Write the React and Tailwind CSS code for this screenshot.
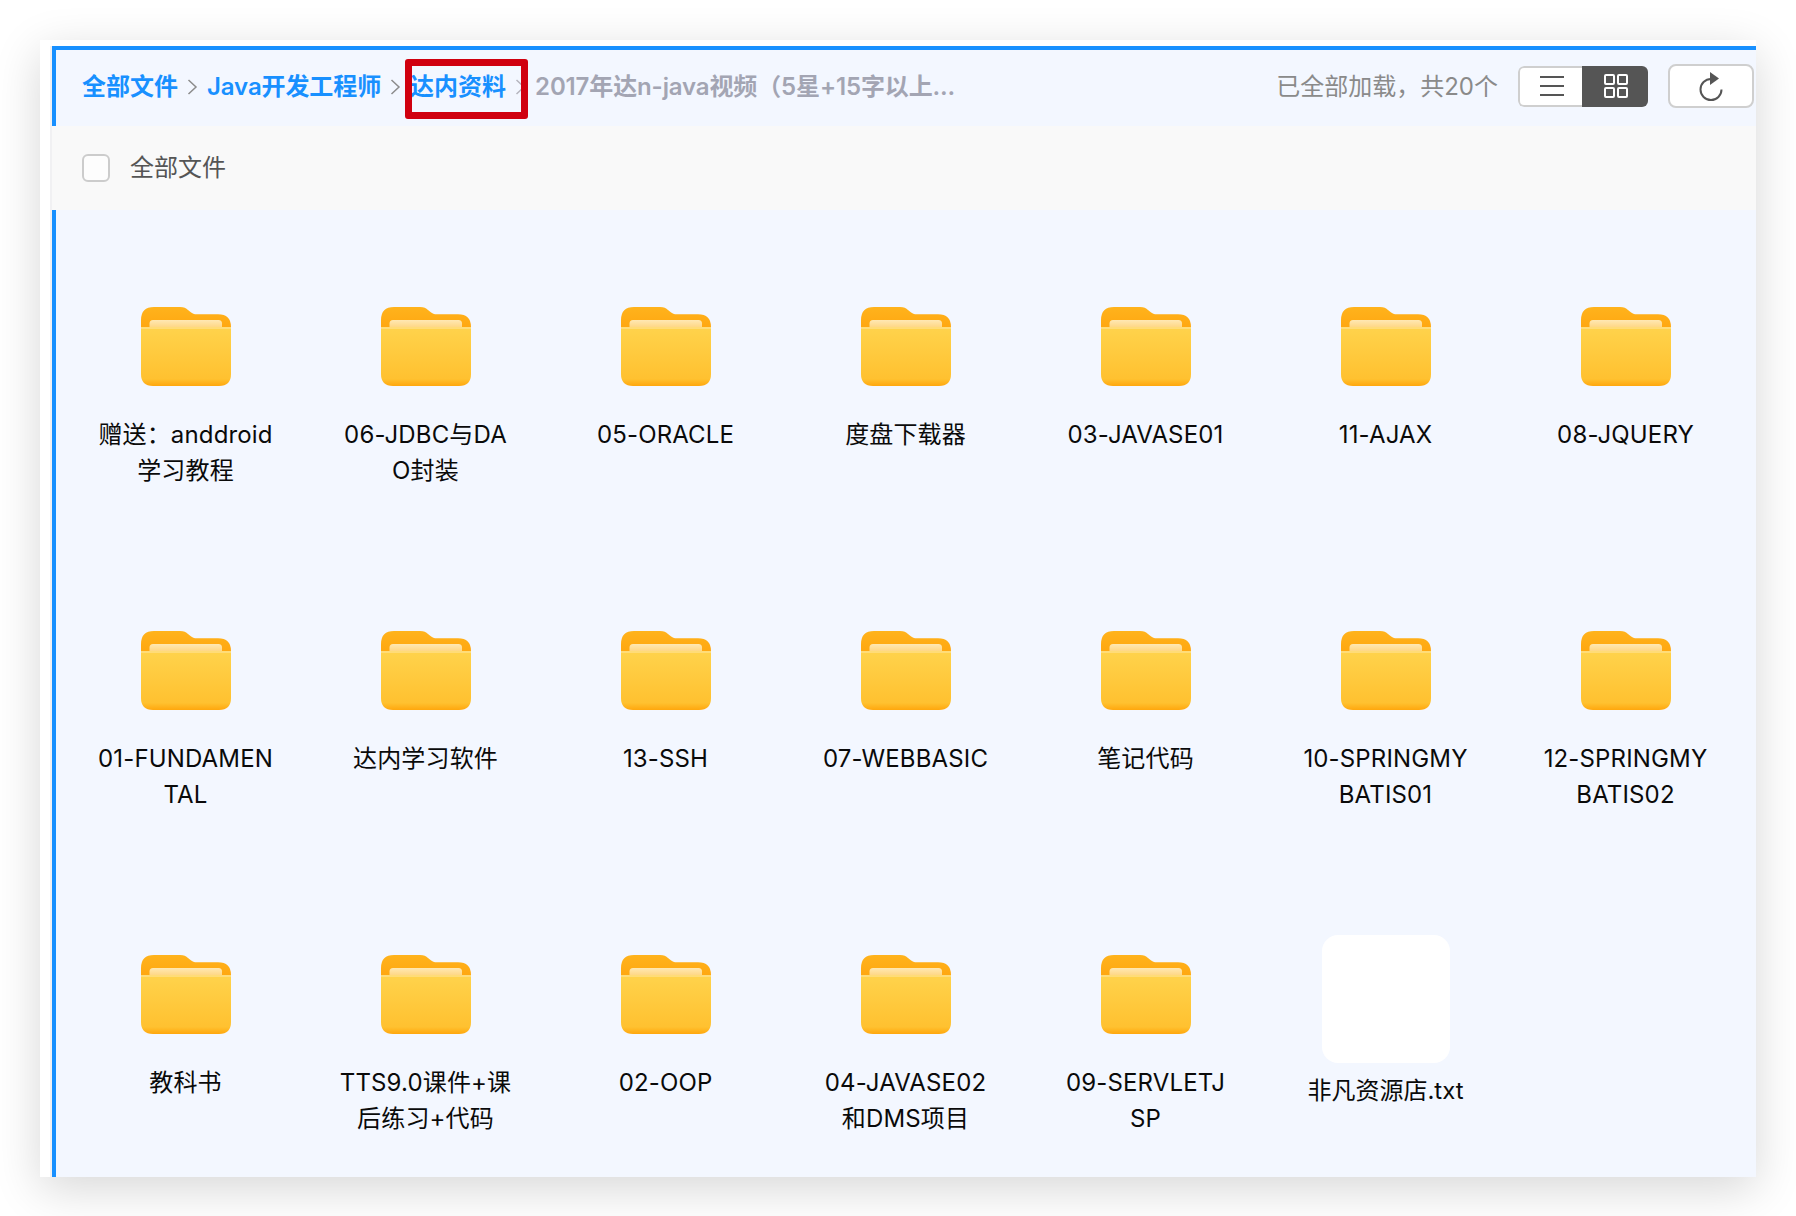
import React from "react";

const files = [
  ["赠送：anddroid", "学习教程"],
  ["06-JDBC与DA", "O封装"],
  ["05-ORACLE"],
  ["度盘下载器"],
  ["03-JAVASE01"],
  ["11-AJAX"],
  ["08-JQUERY"],
  ["01-FUNDAMEN", "TAL"],
  ["达内学习软件"],
  ["13-SSH"],
  ["07-WEBBASIC"],
  ["笔记代码"],
  ["10-SPRINGMY", "BATIS01"],
  ["12-SPRINGMY", "BATIS02"],
  ["教科书"],
  ["TTS9.0课件+课", "后练习+代码"],
  ["02-OOP"],
  ["04-JAVASE02", "和DMS项目"],
  ["09-SERVLETJ", "SP"],
];

const FolderIcon = () => (
  <svg width="90" height="79" viewBox="0 0 90 79" className="block">
    <defs>
      <linearGradient id="folderBack" x1="0" y1="0" x2="0" y2="1">
        <stop offset="0" stopColor="#ffb31c" />
        <stop offset="1" stopColor="#ff9f0a" />
      </linearGradient>
      <linearGradient id="folderPaper" x1="0" y1="0" x2="0" y2="1">
        <stop offset="0" stopColor="#ffe8b4" />
        <stop offset="1" stopColor="#ffc759" />
      </linearGradient>
      <linearGradient id="folderFront" x1="0" y1="0" x2="0" y2="1">
        <stop offset="0" stopColor="#ffd34c" />
        <stop offset="0.88" stopColor="#ffc130" />
        <stop offset="1" stopColor="#ffa70d" />
      </linearGradient>
    </defs>
    <path
      d="M0 13Q0 0 13 0H39C43 0 45 1 47 3L49.500 5C51.500 6.600 53 7.300 56 7.300H77Q90 7.300 90 20V34H0Z"
      fill="url(#folderBack)"
    />
    <rect x="8.500" y="13" width="72.500" height="14" rx="3.500" fill="url(#folderPaper)" />
    <path d="M0 20H90V67Q90 79 78 79H12Q0 79 0 67Z" fill="url(#folderFront)" />
    <rect x="0" y="20" width="90" height="2" fill="#ffdc78" />
  </svg>
);

const Chevron = ({ color = "#8c8c8c" }) => (
  <svg width="11" height="18" viewBox="0 0 11 18" fill="none" className="mx-[9px] shrink-0">
    <path d="M1.500 2L9 9L1.500 16" stroke={color} strokeWidth="1.500" />
  </svg>
);

const FileItem = ({ lines }) => (
  <div className="h-[324px] flex flex-col items-center">
    <div className="mt-[20px] mb-[31px]">
      <FolderIcon />
    </div>
    <div className="pr-[1px] text-center text-[24px] leading-[36px] tracking-[0.15px] text-[#0a0a0a] whitespace-nowrap">
      {lines.map((line) => (
        <div key={line}>{line}</div>
      ))}
    </div>
  </div>
);

export default function App() {
  return (
    <div
      className="h-[1216px] overflow-hidden bg-white pt-10 pl-10 pr-10"
      style={{ fontFamily: '"Inter", "Noto Sans CJK SC", sans-serif' }}
    >
      <div className="h-[1137px] bg-white pt-[6px] pl-[10px] shadow-[0_12px_44px_rgba(0,0,0,0.16)]">
        <div className="h-full border-l-2 border-[#f1f1f3] flex flex-col">
          {/* Header */}
          <div className="relative h-[80px] shrink-0 bg-[#f3f7ff] border-t-4 border-l-4 border-[#1890ff] flex items-center pl-[26px] pr-[2px] pb-[3px]">
            <span className="text-[24px] font-semibold text-[#1890ff]">全部文件</span>
            <Chevron />
            <span className="text-[24px] font-semibold tracking-[-0.1px] text-[#1890ff]">Java开发工程师</span>
            <Chevron />
            <span className="text-[24px] font-semibold text-[#1890ff]">达内资料</span>
            <Chevron color="#b5b5be" />
            <span className="text-[24px] font-semibold tracking-[-0.13px] text-[#a3a5b3]">2017年达n-java视频（5星+15字以上...</span>
            <span className="ml-auto text-[24px] text-[#8a8a8a]">已全部加载，共20个</span>
            <div className="ml-[20px] mb-[1px] flex h-[41px] w-[130px] rounded-[6px] overflow-hidden">
              <div className="w-[64px] pl-[2px] bg-white border-2 border-r-0 border-[#cfcfcf] rounded-l-[6px] flex items-center justify-center">
                <svg width="26" height="22" viewBox="0 0 26 22">
                  <path d="M1 2H25M1 11H25M1 20H25" stroke="#555" strokeWidth="2" />
                </svg>
              </div>
              <div className="flex-1 pl-[2px] bg-[#555555] flex items-center justify-center">
                <svg width="24" height="24" viewBox="0 0 24 24" fill="none" stroke="#fff" strokeWidth="2">
                  <rect x="1" y="1" width="9" height="9" rx="1" />
                  <rect x="14" y="1" width="9" height="9" rx="1" />
                  <rect x="1" y="14" width="9" height="9" rx="1" />
                  <rect x="14" y="14" width="9" height="9" rx="1" />
                </svg>
              </div>
            </div>
            <div className="ml-[20px] mb-[1px] flex h-[44px] w-[86px] items-center justify-center rounded-[8px] bg-white border-2 border-[#cfcfcf]">
              <svg width="24" height="29" viewBox="0 0 24 29" fill="none">
                <path d="M12 7A10.500 10.500 0 1 0 22.500 17.500" stroke="#555" strokeWidth="2" />
                <path d="M11 0L20 6.500L11 13Z" fill="#555" />
              </svg>
            </div>
            {/* Red annotation box */}
            <div className="absolute left-[349px] top-[9px] w-[123px] h-[60px] border-[7px] border-[#d0000f] rounded-[3px]" />
          </div>

          {/* Select all row */}
          <div className="h-[84px] shrink-0 bg-[#f9f9f9] flex items-center pl-[30px]">
            <span className="w-[28px] h-[28px] rounded-[6px] border-2 border-[#cccccc] bg-white/60" />
            <span className="ml-[20px] text-[24px] text-[#555555]">全部文件</span>
          </div>

          {/* Files */}
          <div className="flex-1 min-h-0 bg-[#f3f7ff] border-l-4 border-[#1890ff] pl-[10px] pt-[77px] grid grid-cols-[repeat(7,240px)] content-start">
            {files.map((lines) => (
              <FileItem key={lines[0]} lines={lines} />
            ))}
            <div className="flex flex-col items-center">
              <div className="w-[128px] h-[128px] rounded-[16px] bg-white mb-[10px]" />
              <div className="pr-[1px] text-[24px] leading-[36px] text-[#0a0a0a]">非凡资源店.txt</div>
            </div>
          </div>
        </div>
      </div>
    </div>
  );
}
